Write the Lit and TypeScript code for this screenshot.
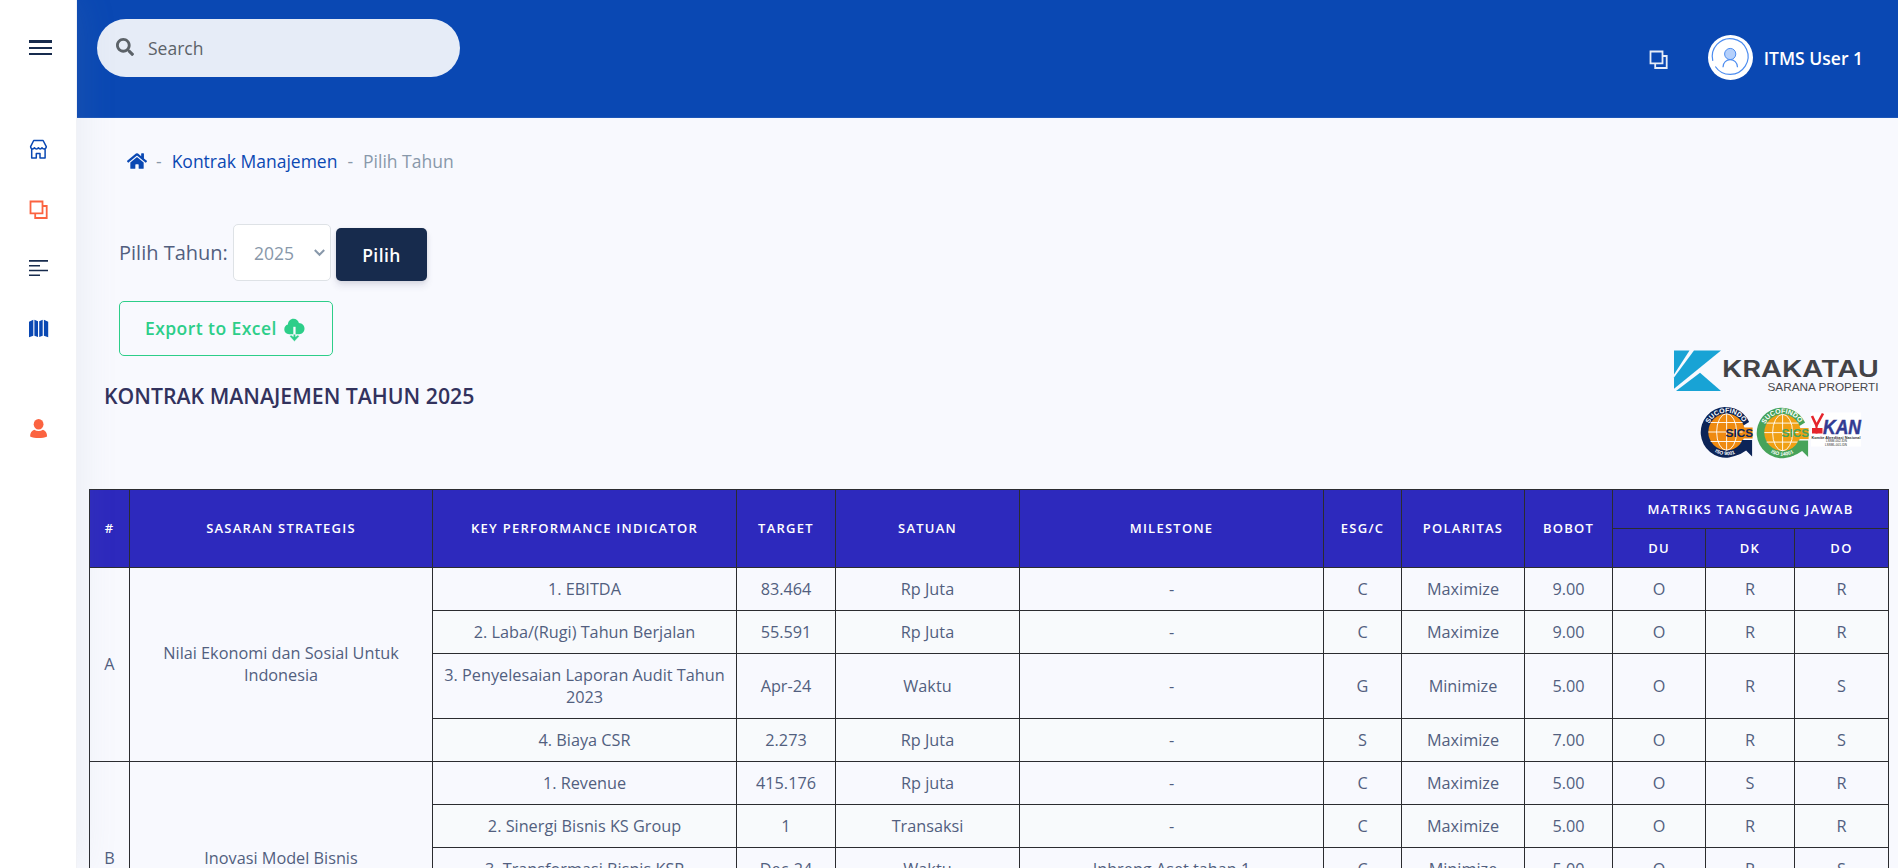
import { LitElement, html, svg, css } from "lit";
import { customElement } from "lit/decorators.js";

type Row = [string, string, string, string, string, string, string, string, string, string];
interface Group { code: string; name: string; rows: Row[] }

const COLUMNS = [40, 303, 304, 99, 184, 304, 78, 123, 88, 93, 89, 95];

const GROUPS: Group[] = [
  {
    code: "A",
    name: "Nilai Ekonomi dan Sosial Untuk Indonesia",
    rows: [
      ["1. EBITDA", "83.464", "Rp Juta", "-", "C", "Maximize", "9.00", "O", "R", "R"],
      ["2. Laba/(Rugi) Tahun Berjalan", "55.591", "Rp Juta", "-", "C", "Maximize", "9.00", "O", "R", "R"],
      ["3. Penyelesaian Laporan Audit Tahun 2023", "Apr-24", "Waktu", "-", "G", "Minimize", "5.00", "O", "R", "S"],
      ["4. Biaya CSR", "2.273", "Rp Juta", "-", "S", "Maximize", "7.00", "O", "R", "S"],
    ],
  },
  {
    code: "B",
    name: "Inovasi Model Bisnis",
    rows: [
      ["1. Revenue", "415.176", "Rp juta", "-", "C", "Maximize", "5.00", "O", "S", "R"],
      ["2. Sinergi Bisnis KS Group", "1", "Transaksi", "-", "C", "Maximize", "5.00", "O", "R", "R"],
      ["3. Transformasi Bisnis KSP", "Dec-24", "Waktu", "Inbreng Aset tahap 1", "C", "Minimize", "5.00", "O", "R", "S"],
      ["", "", "", "", "", "", "", "", "", ""],
    ],
  },
];

const ungroupIcon = svg`<svg width="20" height="20" viewBox="0 0 20 20" fill="none" stroke="currentColor" stroke-width="1.8"><path d="M1.5 1.500h12v11.800h-12zM13.500 6h4.200v12H6.200v-4.600"/></svg>`;

@customElement("app-sidebar")
class AppSidebar extends LitElement {
  static styles = css`
    :host { display: flex; flex-direction: column; align-items: flex-start; box-sizing: border-box; width: 77px; flex: none; padding-left: 29px; background: #fff; border-right: 1px solid #f1f2f6; box-shadow: 0 0 40px rgba(136, 152, 170, 0.15); position: relative; z-index: 2; }
    .burger { display: flex; flex-direction: column; width: 23px; margin-top: 40px; }
    .bar { height: 2px; background: #172b4d; }
    .bar.thick { height: 3px; }
    .bar + .bar { margin-top: 4px; }
    .nav { display: flex; flex-direction: column; gap: 40px; margin-top: 84px; }
    .nav.second { margin-top: 80px; }
    .item { display: block; height: 20px; }
    .low { padding-top: 1px; height: 19px; }
    svg { display: block; }
    .primary { color: #0a48b3; }
    .orange { color: #fb6340; }
    .dark { color: #172b4d; }
  `;
  render() {
    return html`
      <div class="burger"><div class="bar thick"></div><div class="bar"></div><div class="bar"></div></div>
      <nav class="nav">
        <a class="item primary"><svg width="20" height="20" viewBox="0 0 20 20" fill="none" stroke="currentColor" stroke-width="1.500" stroke-linejoin="round"><path d="M4.700 1.500h9.400l3.200 6.100c0 1.400-.9 2.300-2.200 2.300-1 0-1.700-.5-2-1.200-.4.700-1 1.200-1.900 1.200s-1.500-.5-1.900-1.200c-.3.700-1 1.200-1.800 1.200-.9 0-1.600-.5-1.900-1.200-.4.700-1 1.200-2 1.200-1.200 0-2-.9-2-2.300zM2.700 10.100v9h4.600v-4.500h3.700v4.500h5.100v-9"/></svg></a>
        <a class="item low orange">${ungroupIcon}</a>
        <a class="item dark"><svg width="20" height="20" viewBox="0 0 20 20" stroke="currentColor" stroke-width="1.600"><path d="M0 1.900h19M0 6.700h11M0 11.500h19M0 16.300h11"/></svg></a>
        <a class="item primary"><svg width="20" height="20" viewBox="0 0 20 20" fill="currentColor"><path d="M4.300.8v15.900L0 18.300V2.800zM5.400.8l3.600 1.500v15.600l-3.600-1.200zM10.200 2.300 13.700.8v15.900l-3.500 1.200zM14.900.8l4.300 2v15.500l-4.300-1.600z"/></svg></a>
      </nav>
      <nav class="nav second">
        <a class="item orange"><svg width="20" height="20" viewBox="0 0 20 20" fill="currentColor"><ellipse cx="9.600" cy="5.200" rx="4.900" ry="5.200"/><path d="M5.200 10.700c2.800 1.700 6 1.700 8.800 0 2.500.9 4.100 3 4.100 6.700-4.500 2-12.400 2-17 0 0-3.700 1.600-5.800 4.100-6.700z"/></svg></a>
      </nav>`;
  }
}

@customElement("app-topbar")
class AppTopbar extends LitElement {
  static styles = css`
    :host { display: flex; box-sizing: border-box; height: 118px; flex: none; padding: 19px 35px 0 20px; background: #0a48b3; border-bottom: 1px solid #1c56b8; align-items: flex-start; }
    .search { display: flex; align-items: center; box-sizing: border-box; width: 363px; height: 58px; padding: 0 19px; gap: 14px; border-radius: 30px; background: #e6ecf7; color: #5c6268; font-size: 17.5px; }
    .search svg { margin-top: -3px; }
    .right { margin-left: auto; display: flex; align-items: flex-start; color: #fff; }
    .quick { display: block; height: 20px; margin-top: 31px; color: #e6ecf7; }
    .quick svg { display: block; }
    .avatar { display: block; margin: 16px 11px 0 39px; }
    .user { font-size: 17.5px; font-weight: 600; line-height: 26px; margin-top: 26px; }
  `;
  render() {
    return html`
      <div class="search">
        <svg width="18" height="18" viewBox="0 0 512 512" fill="currentColor"><path d="M505 442.700L405.300 343c-4.500-4.500-10.600-7-17-7H372c27.600-35.300 44-79.700 44-128C416 93.100 322.900 0 208 0S0 93.100 0 208s93.100 208 208 208c48.300 0 92.700-16.400 128-44v16.300c0 6.400 2.500 12.500 7 17l99.700 99.700c9.400 9.400 24.600 9.400 33.900 0l28.300-28.300c9.400-9.400 9.400-24.600.1-34zM208 336c-70.700 0-128-57.200-128-128 0-70.700 57.200-128 128-128 70.700 0 128 57.200 128 128 0 70.700-57.200 128-128 128z"/></svg>
        <span>Search</span>
      </div>
      <div class="right">
        <a class="quick">${ungroupIcon}</a>
        <svg class="avatar" width="45" height="45" viewBox="0 0 45 45" fill="none">
          <circle cx="22.500" cy="22.500" r="22.500" fill="#fff"/>
          <path d="M4.800 25.900A17.900 17.900 0 1 1 7.300 31.500" stroke="#4d8df0" stroke-width="1.200"/>
          <circle cx="22.200" cy="19" r="5.600" fill="#b5d0fb" stroke="#4d8df0"/>
          <path d="M15 32.200c0-10 14.500-10 14.500 0" stroke="#4d8df0" stroke-width="1.200"/>
        </svg>
        <span class="user">ITMS User 1</span>
      </div>`;
  }
}

@customElement("company-marks")
class CompanyMarks extends LitElement {
  static styles = css`
    :host { display: block; }
    svg { display: block; }
    .gothic { font-family: "Liberation Sans", sans-serif; }
    .wide { font-family: Inter, sans-serif; font-weight: 600; }
    .bold { font-weight: 700; }
  `;
  private seal(cx: number, cy: number, id: string, ring: string, globe: string, label: string, iso: string) {
    return svg`<g transform="translate(${cx} ${cy})" class="gothic">
      <path d="M22.500-10A25.300 25.300 0 1 0 12 22.300L15 8 16-6z" fill="${ring}"/>
      <circle r="18.300" fill="${globe}"/>
      <path d="M0-18.300V18.300M-18.300 0H18.300M-16-9.500H16M-16 9.500H16" stroke="#fff" stroke-width=".9"/>
      <ellipse rx="10" ry="18.300" fill="none" stroke="#fff" stroke-width=".9"/>
      <path d="M15.500 8H25.500V24.500L19.500 18.500Q15 22 9 23.600L7 17.500Q14 14 15.500 8z" fill="${ring}"/>
      <path d="M16-4.500H26V6.500H16z" fill="${globe}"/>
      <text class="bold" x="-1" y="4.600" font-size="10.500" textLength="27.500" lengthAdjust="spacingAndGlyphs" fill="${label}">SICS</text>
      <path id="arc-${id}" d="M-17.500-8.200A19.300 19.300 0 0 1 17.500-8.200" fill="none"/>
      <path id="low-${id}" d="M-13.500 18.800A23.200 23.200 0 0 0 13.500 18.800" fill="none"/>
      <text class="bold" font-size="6.800" fill="#fff"><textPath href="#arc-${id}" textLength="42" lengthAdjust="spacingAndGlyphs">SUCOFINDO</textPath></text>
      <text class="bold" font-size="5" fill="#fff"><textPath href="#low-${id}" startOffset="2">${iso}</textPath></text>
    </g>`;
  }
  render() {
    return html`<svg width="208" height="112" viewBox="1672 348 208 112">
      <g fill="#18a3d5">
        <path d="M1674 350.500h15.500L1674 374.500z"/>
        <path d="M1694 350.500h27L1674 388.800V377.500z"/>
        <path d="M1700 372.800 1721 391h-45z"/>
      </g>
      <text class="wide" x="1722" y="376.800" font-size="23.400" textLength="157" lengthAdjust="spacingAndGlyphs" fill="#434347">KRAKATAU</text>
      <text class="gothic" x="1767.500" y="390.800" font-size="11.200" textLength="111" lengthAdjust="spacingAndGlyphs" fill="#48484c">SARANA PROPERTI</text>
      ${this.seal(1726.600, 432, "a", "#0c2457", "#ef8a10", "#0c2457", "ISO 9001")}
      ${this.seal(1782.600, 432.600, "b", "#47a35a", "#f0a014", "#47a35a", "ISO 14001")}
      <rect x="1811" y="412.500" width="50" height="34" fill="#fff"/>
      <path d="M1812 416 1816.500 425.500 1823 413.500" fill="none" stroke="#e5252c" stroke-width="2.600"/>
      <path d="M1812 428h10.500v5.500H1812z" fill="#e5252c"/><path d="M1816.500 424.500v9" stroke="#e5252c" stroke-width="2"/>
      <text class="gothic bold" x="1823" y="433.800" font-size="20.500" font-style="italic" textLength="38" lengthAdjust="spacingAndGlyphs" fill="#333b92" stroke="#333b92" stroke-width=".5">KAN</text>
      <text class="gothic bold" x="1811.500" y="438.600" font-size="4.200" textLength="49" lengthAdjust="spacingAndGlyphs" fill="#333">Komite Akreditasi Nasional</text>
      <text class="gothic" x="1826" y="442.300" font-size="3.600" textLength="21" lengthAdjust="spacingAndGlyphs" fill="#222">LSSM-002-IDN</text>
      <text class="gothic" x="1825" y="445.800" font-size="3.600" textLength="22" lengthAdjust="spacingAndGlyphs" fill="#222">LSSML-001-IDN</text>
    </svg>`;
  }
}

@customElement("contract-table")
class ContractTable extends LitElement {
  static styles = css`
    :host { display: block; }
    table { table-layout: fixed; width: 1800px; border-collapse: separate; border-spacing: 0; border-bottom: 1px solid #2b2c30; }
    th, td { box-sizing: border-box; border: 0 solid #2b2c30; border-width: 1px 0 0 1px; text-align: center; vertical-align: middle; }
    .edge { border-right-width: 1px; }
    th { height: 39px; padding: 0 10px; background: #2d29bd; color: #fff; font-size: 13px; font-weight: 600; letter-spacing: 1.25px; line-height: 18px; white-space: nowrap; }
    td { height: 43px; padding: 10px; color: #525f7f; font-size: 16.25px; line-height: 22px; }
    .alt td { background: #f8fafc; }
    .tall td { height: 65px; }
    th.span { padding-bottom: 1px; }
    td.span { padding-bottom: 12px; }
  `;
  render() {
    const heads = ["#", "SASARAN STRATEGIS", "KEY PERFORMANCE INDICATOR", "TARGET", "SATUAN", "MILESTONE", "ESG/C", "POLARITAS", "BOBOT"];
    return html`<table>
      <colgroup>${COLUMNS.map((w) => html`<col style="width:${w}px">`)}</colgroup>
      <thead>
        <tr>${heads.map((h) => html`<th class="span" rowspan="2">${h}</th>`)}<th class="edge" colspan="3">MATRIKS TANGGUNG JAWAB</th></tr>
        <tr><th>DU</th><th>DK</th><th class="edge">DO</th></tr>
      </thead>
      <tbody>
        ${GROUPS.map((g) => g.rows.map((row, i) => html`
          <tr class="${i % 2 ? "alt" : ""} ${row[0] ? "" : "tall"}">
            ${i === 0 ? html`<td class="span" rowspan=${g.rows.length}>${g.code}</td><td class="span" rowspan=${g.rows.length}>${g.name}</td>` : ""}
            ${row.map((c, j) => html`<td class=${j === 9 ? "edge" : ""}>${c}</td>`)}
          </tr>`))}
      </tbody>
    </table>`;
  }
}

@customElement("app-root")
class AppRoot extends LitElement {
  static styles = css`
    :host { display: flex; width: 1898px; height: 868px; overflow: hidden; background: #f8f9fe; font-family: "Open Sans", sans-serif; color: #525f7f; }
    .main { flex: 1; min-width: 0; display: flex; flex-direction: column; }
    .main > * { flex-shrink: 0; }
    .crumbs { display: flex; align-items: center; height: 26px; margin: 30px 0 0 50px; font-size: 17.5px; line-height: 26px; color: #8898aa; }
    .home { display: block; margin-right: 9px; }
    .link { color: #0a48b3; margin: 0 10px; }
    .here { margin-left: 10px; }
    .picker { display: flex; align-items: flex-start; margin: 50px 0 0 42px; height: 57px; }
    .label { font-size: 20px; line-height: 30px; margin-top: 14px; width: 114px; white-space: nowrap; }
    .select { box-sizing: border-box; display: flex; align-items: center; justify-content: space-between; width: 98px; height: 57px; padding: 0 5px 0 20px; border: 1px solid #dee2e6; border-radius: 5px; background: #fff; color: #8898aa; font-size: 17.5px; }
    .select svg { margin-top: 1px; }
    .pick { margin: 4px 0 0 5px; width: 91px; height: 53px; border-radius: 5px; background: #172b4d; color: #fff; font-size: 17.5px; font-weight: 600; letter-spacing: 0.44px; line-height: 54px; text-align: center; box-shadow: 0 5px 7px rgba(50, 50, 93, 0.11), 0 1px 4px rgba(0, 0, 0, 0.08); }
    .export { box-sizing: border-box; display: flex; align-items: center; width: 214px; height: 55px; margin: 20px 0 0 42px; padding-left: 25px; gap: 7px; border: 1px solid #2dce89; border-radius: 5px; color: #2dce89; font-size: 17.5px; font-weight: 600; letter-spacing: 0.44px; }
    .export span { margin-top: -2px; }
    .export svg { margin-top: 3px; }
    .heading { display: flex; justify-content: space-between; align-items: flex-start; height: 141px; padding: 0 18px 0 27px; }
    h4 { margin: 25px 0 0; font-size: 21.25px; font-weight: 600; line-height: 30px; color: #32325d; }
    .marks { margin-top: -8px; }
    .sheet { margin: -8px 0 0 12px; }
  `;
  render() {
    return html`
      <app-sidebar></app-sidebar>
      <div class="main">
        <app-topbar></app-topbar>
        <div class="crumbs">
          <svg class="home" width="20" height="18" viewBox="0 0 576 512" fill="#0a48b3"><path d="M280.370 148.260L96 300.110V464a16 16 0 0 0 16 16l112.060-.29a16 16 0 0 0 15.920-16V368a16 16 0 0 1 16-16h64a16 16 0 0 1 16 16v95.640a16 16 0 0 0 16 16.050L464 480a16 16 0 0 0 16-16V300L295.670 148.260a12.190 12.190 0 0 0-15.300 0zM571.600 251.470L488 182.560V44.050a12 12 0 0 0-12-12h-56a12 12 0 0 0-12 12v72.610L318.470 43a48 48 0 0 0-61 0L4.340 251.470a12 12 0 0 0-1.600 16.900l25.500 31A12 12 0 0 0 45.150 301l235.220-193.740a12.190 12.190 0 0 1 15.300 0L530.900 301a12 12 0 0 0 16.900-1.600l25.500-31a12 12 0 0 0-1.700-16.930z"/></svg>
          <span>-</span><span class="link">Kontrak Manajemen</span><span>-</span><span class="here">Pilih Tahun</span>
        </div>
        <div class="picker">
          <span class="label">Pilih Tahun:</span>
          <div class="select"><span>2025</span><svg width="11" height="8" viewBox="0 0 11 8" fill="none" stroke="#8898aa" stroke-width="2"><path d="M.8 1 5.500 5.800 10.200 1"/></svg></div>
          <div class="pick">Pilih</div>
        </div>
        <div class="export"><span>Export to Excel</span>
          <svg width="21" height="24" viewBox="0 0 21 24" fill="#2dce89"><path d="M9.200 16.200H5.200C2.200 16.200.3 14 .3 11.300c0-2.400 1.500-4.200 3.600-4.700C4 3.200 6.400.7 9.500.7c2.700 0 4.800 1.700 5.400 4.200 3.300.1 5.600 2.500 5.600 5.600s-2.300 5.700-5.400 5.700z"/><path d="M9.300 8.800h2.300v7.700H9.300z" fill="#f8f9fe"/><path d="M5.700 18.200l1.300-1.300 2.300 1.700v-2.400h2.300v2.400l2.300-1.700 1.400 1.300-4.900 5.200z" stroke="#f8f9fe" stroke-width=".5"/></svg>
        </div>
        <div class="heading"><h4>KONTRAK MANAJEMEN TAHUN 2025</h4><company-marks class="marks"></company-marks></div>
        <contract-table class="sheet"></contract-table>
      </div>`;
  }
}
